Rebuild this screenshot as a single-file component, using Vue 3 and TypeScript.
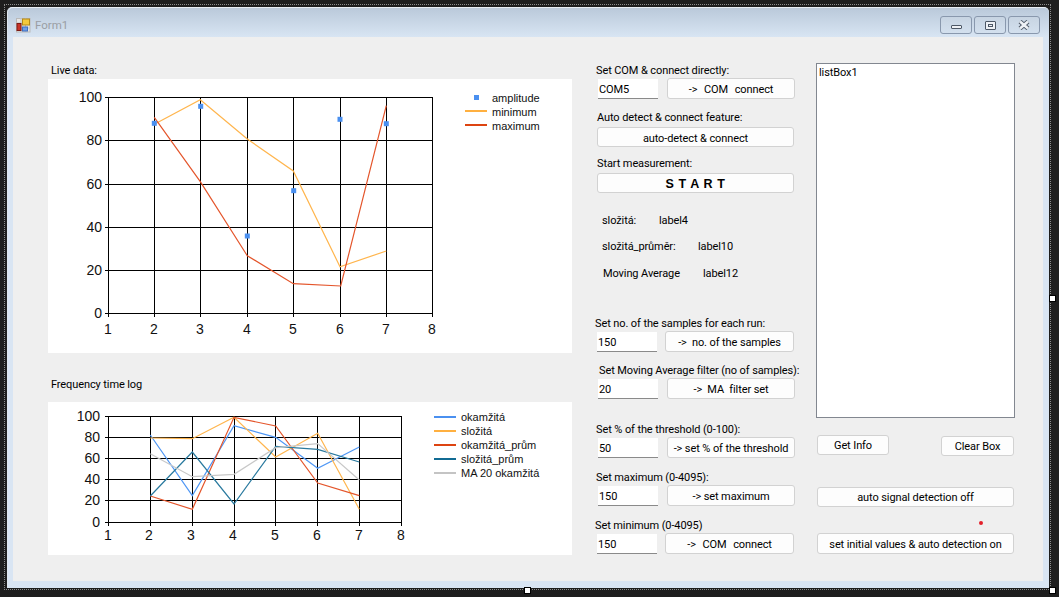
<script setup lang="ts">
type Pt = [number, number]
interface Series { color: string; pts: Pt[] }
const toPoints = (p: Pt[]) => p.map(q => q.join(',')).join(' ')

const c1X = [154.5, 200.5, 247.5, 293.5, 340.5, 386.5]
const c1Y = [140.5, 184.5, 227.5, 270.5]
const c1YLab = [[100, 97], [80, 140], [60, 184], [40, 227], [20, 270], [0, 313]]
const c1XLab = [[1, 108], [2, 154], [3, 200], [4, 247], [5, 293], [6, 340], [7, 386], [8, 432]]
const c1Series: Series[] = [
  { color: '#ffb54d', pts: [[154.3, 124.3], [200.3, 99.7], [247.3, 139], [293.3, 171], [340, 266.7], [386.3, 251]] },
  { color: '#e4552b', pts: [[154.3, 117.3], [200.3, 181.7], [247.3, 255.7], [293.3, 283.7], [340.7, 286], [386.3, 105.7]] }
]
const c1Marks: Pt[] = [[154.3, 123.3], [200.7, 106.3], [247.3, 236], [293.7, 190.7], [340, 119.3], [386.3, 123.7]]

const c2X = [150.5, 192.5, 234.5, 275.5, 317.5, 359.5]
const c2Y = [437.5, 458.5, 479.5, 500.5]
const c2YLab = [[100, 416], [80, 437], [60, 458], [40, 479], [20, 500], [0, 522]]
const c2XLab = [[1, 108], [2, 149], [3, 191], [4, 233], [5, 275], [6, 317], [7, 359], [8, 401]]
const cx = [150.3, 192.3, 234, 275.7, 317.7, 359.3]
const c2Pts = (ys: number[]): Pt[] => ys.map((y, i) => [cx[i], 400 + y / 3])
const c2Series: Series[] = [
  { color: '#4f97f5', pts: c2Pts([105, 287, 77, 112, 205, 141]) },
  { color: '#ffb54d', pts: c2Pts([114, 116, 52, 171, 100, 328]) },
  { color: '#e4552b', pts: c2Pts([288, 328, 52, 78, 249, 287]) },
  { color: '#2a7a9f', pts: c2Pts([288, 156, 312, 139, 148, 186]) },
  { color: '#c8c8c8', pts: c2Pts([161, 230, 223, 143, 131, 240]) }
]
const c2Legend = [
  { t: 'okamžitá', c: '#4a90f0', y: 417 },
  { t: 'složitá', c: '#ffb040', y: 431 },
  { t: 'okamžitá_prům', c: '#dd4411', y: 445 },
  { t: 'složitá_prům', c: '#116b93', y: 459 },
  { t: 'MA 20 okamžitá', c: '#c4c4c4', y: 473 }
]
</script>

<template>
  <div class="stage">
    <div class="guide"></div>
    <span class="grip grip-e"></span>
    <span class="grip grip-s"></span>
    <span class="grip grip-se"></span>
    <div class="window">
      <header class="titlebar">
        <svg class="appicon" width="16" height="16" viewBox="0 0 16 16">
          <rect x="0.5" y="0.5" width="13.5" height="13.5" fill="#e6e6e6" stroke="#b9b9b9" />
          <path d="M5 0v14M0 5h14M9.5 0v14M0 10h14" stroke="#c4c4c4" fill="none" />
          <rect x="6.5" y="1" width="7" height="6" fill="#f5c93c" stroke="#b58a16" />
          <rect x="1" y="5.5" width="4" height="7" fill="#c9342a" stroke="#7e1a14" />
          <rect x="6.5" y="9" width="5" height="4" fill="#6f9fe8" stroke="#3f6fc0" />
        </svg>
        <span class="caption">Form1</span>
        <div class="winbtns">
          <button class="winbtn"><span class="g-min"></span></button>
          <button class="winbtn"><span class="g-max"></span></button>
          <button class="winbtn">
            <svg width="12" height="10" viewBox="0 0 12 10">
              <path d="M2 1.5 L10 8.5 M10 1.5 L2 8.5" stroke="#4d5866" stroke-width="4.4" />
              <path d="M2 1.5 L10 8.5 M10 1.5 L2 8.5" stroke="#eef1f5" stroke-width="2.6" />
            </svg>
          </button>
        </div>
      </header>
      <main class="client">
        <section class="col-charts">
          <div class="lbl">Live data:</div>
          <svg class="chart chart-a" width="524" height="274" viewBox="48 79 524 274">
            <rect x="48" y="79" width="524" height="274" fill="#fff" />
            <g stroke="#000" shape-rendering="crispEdges">
              <rect x="108.5" y="97.5" width="324" height="216" fill="none" />
              <line v-for="x in c1X" :key="x" :x1="x" :x2="x" y1="97" y2="317" />
              <line v-for="y in c1Y" :key="y" x1="105" x2="433" :y1="y" :y2="y" />
              <path d="M105 97.5h4M105 313.5h4M108.5 313v4M432.5 313v4" />
            </g>
            <polyline v-for="s in c1Series" :key="s.color" :points="toPoints(s.pts)" fill="none" :stroke="s.color" stroke-width="1.2" />
            <rect v-for="m in c1Marks" :key="m[0]" :x="m[0] - 2.5" :y="m[1] - 2.5" width="5" height="5" fill="#4a90f0" />
            <g class="tick">
              <text v-for="l in c1YLab" :key="l[0]" x="102" :y="l[1] + 5" text-anchor="end">{{ l[0] }}</text>
              <text v-for="l in c1XLab" :key="l[0]" :x="l[1]" y="334" text-anchor="middle">{{ l[0] }}</text>
            </g>
            <rect x="474" y="95" width="5" height="5" fill="#4a90f0" />
            <path d="M465 111h22" stroke="#ffb040" stroke-width="2" />
            <path d="M465 125h22" stroke="#dd4411" stroke-width="2" />
            <g class="leg">
              <text x="492" y="102">amplitude</text>
              <text x="492" y="116">minimum</text>
              <text x="492" y="130">maximum</text>
            </g>
          </svg>
          <div class="lbl lbl-freq">Frequency time log</div>
          <svg class="chart chart-b" width="524" height="153" viewBox="48 402 524 153">
            <rect x="48" y="402" width="524" height="153" fill="#fff" />
            <g stroke="#000" shape-rendering="crispEdges">
              <rect x="108.5" y="416.5" width="293" height="106" fill="none" />
              <line v-for="x in c2X" :key="x" :x1="x" :x2="x" y1="416" y2="526" />
              <line v-for="y in c2Y" :key="y" x1="105" x2="402" :y1="y" :y2="y" />
              <path d="M105 416.5h4M105 522.5h4M108.5 522v4M401.5 522v4" />
            </g>
            <polyline v-for="s in c2Series" :key="s.color" :points="toPoints(s.pts)" fill="none" :stroke="s.color" stroke-width="1.2" />
            <g class="tick">
              <text v-for="l in c2YLab" :key="l[0]" x="100" :y="l[1] + 4.5" text-anchor="end">{{ l[0] }}</text>
              <text v-for="l in c2XLab" :key="l[0]" :x="l[1]" y="540" text-anchor="middle">{{ l[0] }}</text>
            </g>
            <g v-for="l in c2Legend" :key="l.t">
              <line x1="434" x2="456" :y1="l.y" :y2="l.y" :stroke="l.c" stroke-width="2" />
              <text class="leg" x="461" :y="l.y + 4">{{ l.t }}</text>
            </g>
          </svg>
        </section>

        <section class="col-controls">
          <div class="group">
            <div class="lbl ml1">Set COM &amp; connect directly:</div>
            <div class="row"><input class="tb ind3" value="COM5" /><button class="btn b-wide ws">-&gt;&nbsp; COM&nbsp; connect</button></div>
          </div>
          <div class="group mt11">
            <div class="lbl ml2 gap2">Auto detect &amp; connect feature:</div>
            <button class="btn b-full">auto-detect &amp; connect</button>
          </div>
          <div class="group mt8">
            <div class="lbl ml2 gap2">Start measurement:</div>
            <button class="btn b-full start">S T A R T</button>
          </div>
          <div class="pair mt19"><span class="lbl ml7 w57">složitá:</span><span class="lbl">label4</span></div>
          <div class="pair mt10"><span class="lbl ml7 w96">složitá_průměr:</span><span class="lbl">label10</span></div>
          <div class="pair mt11"><span class="lbl ml8 w100">Moving Average</span><span class="lbl">label12</span></div>
          <div class="group mt34">
            <div class="lbl">Set no. of the samples for each run:</div>
            <div class="row"><input class="tb ind2" value="150" /><button class="btn b-wide2">-&gt;&nbsp; no. of the samples</button></div>
          </div>
          <div class="group mt11">
            <div class="lbl ml4">Set Moving Average filter (no of samples):</div>
            <div class="row"><input class="tb ind3" value="20" /><button class="btn b-wide">-&gt;&nbsp; MA&nbsp; filter set</button></div>
          </div>
          <div class="group mt23">
            <div class="lbl ml1">Set % of the threshold (0-100):</div>
            <div class="row"><input class="tb ind3" value="50" /><button class="btn b-wide">-&gt; set % of the threshold</button></div>
          </div>
          <div class="group mt12">
            <div class="lbl ml1">Set maximum (0-4095):</div>
            <div class="row"><input class="tb ind3" value="150" /><button class="btn b-wide">-&gt; set maximum</button></div>
          </div>
          <div class="group mt12">
            <div class="lbl">Set minimum (0-4095)</div>
            <div class="row"><input class="tb ind2" value="150" /><button class="btn b-wide2 ws">-&gt;&nbsp; COM&nbsp; connect</button></div>
          </div>
        </section>

        <section class="col-right">
          <div class="listbox">listBox1</div>
          <div class="info-row">
            <button class="btn small">Get Info</button>
            <button class="btn small small-b">Clear Box</button>
          </div>
          <button class="btn r-full off">auto signal detection off</button>
          <div class="dotwrap"><span class="dot"></span></div>
          <button class="btn r-full">set initial values &amp; auto detection on</button>
        </section>
      </main>
    </div>
  </div>
</template>

<style>
html, body { margin: 0; background: #1e1e1e; overflow: hidden; }
</style>

<style scoped>
.stage {
  position: relative;
  width: 1059px;
  height: 597px;
  box-sizing: border-box;
  padding: 7px 10px 9px 7px;
  background: #1e1e1e;
  font-family: Roboto, "Liberation Sans", sans-serif;
  font-size: 11px;
  letter-spacing: -0.1px;
  color: #000;
  overflow: hidden;
}
.guide {
  position: absolute;
  left: 4px; top: 4px; width: 1047px; height: 586px;
  box-sizing: border-box;
  border: 1px dotted #8c8c8c;
}
.grip {
  position: absolute;
  width: 5px; height: 5px;
  background: #fff;
  border: 1px solid #000;
  z-index: 3;
}
.grip-e { left: 1049px; top: 295px; }
.grip-s { left: 524px; top: 587px; }
.grip-se { left: 1049px; top: 587px; }
.window {
  position: relative;
  height: 581px;
  box-sizing: border-box;
  display: flex;
  flex-direction: column;
  background: #d9e5f3;
  border-top: 1px solid #e8eef5;
  border-left: 1px solid #dfe6ee;
  border-radius: 5px 5px 0 0;
  padding: 0 6px 7px 5px;
}
.titlebar {
  flex: none;
  height: 29px;
  margin: 0 -6px 0 -5px;
  padding: 0 6px 0 8px;
  display: flex;
  align-items: center;
  background: linear-gradient(#bac9da, #d8e5f3);
  border-radius: 5px 5px 0 0;
}
.appicon { margin-top: 6px; flex: none; }
.caption { margin-left: 3px; margin-top: 5px; color: #9a9ea4; font-size: 11.5px; letter-spacing: 0; }
.winbtns { margin-left: auto; margin-top: 5px; display: flex; gap: 2px; padding-right: 3px; }
.winbtn {
  width: 32px; height: 18px;
  padding: 0;
  box-sizing: border-box;
  border: 1px solid #8998ad;
  border-radius: 3px;
  background: linear-gradient(#c7d4e2, #d3e0ee);
  display: flex; align-items: center; justify-content: center;
}
.g-min { width: 11px; height: 4px; margin-top: 4px; box-sizing: border-box; background: #eef1f5; border: 1px solid #4d5866; border-radius: 1px; }
.g-max { width: 11px; height: 9px; box-sizing: border-box; border: 1px solid #4d5866; background: #eef1f5; box-shadow: inset 0 0 0 2px #eef1f5, inset 0 0 0 3px #4d5866; border-radius: 1px; }

.client {
  flex: 1;
  min-height: 0;
  display: flex;
  padding: 25px 0 0 35px;
  background: #efefef;
}
.lbl { height: 16px; line-height: 18px; white-space: nowrap; }
.chart { display: block; }
.col-charts { width: 524px; flex: none; position: relative; }
.chart-a { margin-top: 1px; }
.lbl-freq { margin-top: 23px; margin-bottom: 10px; }
.col-charts > .lbl { padding-left: 3px; }
.tick text { font-family: "Liberation Sans", sans-serif; font-size: 14px; fill: #111; letter-spacing: 0; }
.leg text, text.leg { font-family: "Liberation Sans", sans-serif; font-size: 11px; fill: #111; letter-spacing: 0; }

.col-controls { width: 200px; margin-left: 23px; flex: none; }
.row { display: flex; align-items: flex-start; height: 20px; }
.group .gap2 { margin-bottom: 2px; }
.pair { display: flex; }
.ml1 { margin-left: 1px; }
.ml2 { margin-left: 2px; }
.ml4 { margin-left: 4px; }
.ml7 { margin-left: 7px; }
.ml8 { margin-left: 8px; }
.w57 { width: 57px; }
.w96 { width: 96px; }
.w100 { width: 100px; }
.mt8 { margin-top: 8px; }
.mt10 { margin-top: 10px; }
.mt11 { margin-top: 11px; }
.mt12 { margin-top: 12px; }
.mt19 { margin-top: 19px; }
.mt23 { margin-top: 23px; }
.mt34 { margin-top: 34px; }

.tb {
  width: 60px; height: 20px;
  margin-top: 1px;
  box-sizing: border-box;
  padding: 2px 1px 0;
  font: inherit;
  letter-spacing: inherit;
  color: #000;
  background: #fff;
  border: 0;
  border-bottom: 1px solid #8a8a8a;
  outline: 0;
}
.ind2 { margin-left: 2px; }
.ind3 { margin-left: 3px; }
.btn {
  display: block;
  height: 21px;
  padding: 1px 0 0;
  box-sizing: border-box;
  font: inherit;
  letter-spacing: inherit;
  color: #000;
  background: #fdfdfd;
  border: 1px solid #d2d2d2;
  border-radius: 3px;
  white-space: nowrap;
}
.ws { word-spacing: 0.7px; }
.b-wide { width: 128px; margin-left: 9px; }
.b-wide2 { width: 129px; margin-left: 8px; }
.b-full { width: 197px; margin-left: 2px; height: 20px; padding-top: 2px; }
.start { font-family: "Liberation Sans", sans-serif; font-weight: 700; font-size: 12.5px; letter-spacing: 0.6px; }

.col-right { width: 199px; margin-left: 21px; flex: none; position: relative; }
.listbox {
  width: 199px; height: 355px;
  margin-top: 1px;
  box-sizing: border-box;
  padding: 2px 2px;
  background: #fff;
  border: 1px solid #828790;
  line-height: 14px;
}
.info-row { display: flex; justify-content: space-between; align-items: flex-start; height: 21px; margin: 17px 1px 0 1px; }
.small { width: 72px; height: 20px; }
.small-b { width: 73px; margin-top: 1px; }
.r-full { width: 197px; margin-left: 1px; }
.off { margin-top: 31px; height: 20px; }
.dotwrap { height: 26px; position: relative; }
.dot { position: absolute; left: 163px; top: 14px; width: 4px; height: 4px; border-radius: 50%; background: #e3202a; }
</style>
